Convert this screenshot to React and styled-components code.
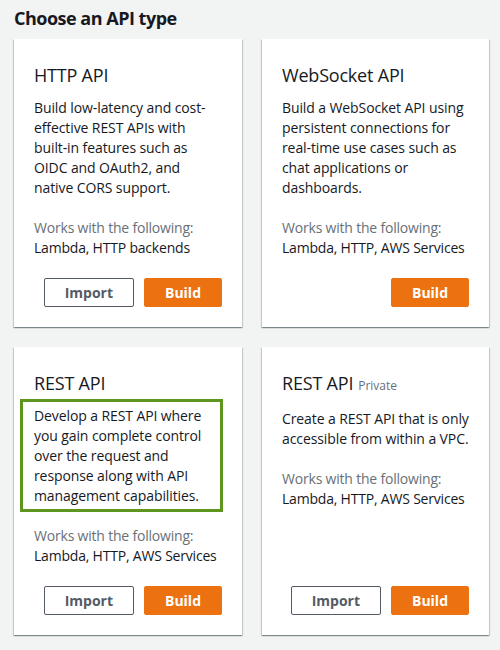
import React from "react";
import styled, { createGlobalStyle } from "styled-components";

const GlobalStyle = createGlobalStyle`
  body {
    margin: 0;
    background-color: #f2f3f3;
    font-family: "Open Sans", "Noto Sans", Arial, sans-serif;
    color: #16191f;
  }
`;

const Page = styled.main`
  padding: 7px 11px 12px 14px;
`;

const Heading = styled.h2`
  margin: 0 0 10px;
  font-size: 18px;
  line-height: 22px;
  font-weight: 700;
  letter-spacing: -0.5px;
`;

const Grid = styled.div`
  display: grid;
  grid-template-columns: 228px 227px;
  grid-auto-rows: 288px;
  gap: 20px;
`;

const Card = styled.section`
  display: flex;
  flex-direction: column;
  padding: 24px 20px 20px;
  background-color: #fff;
  box-shadow: 0 1px 1px 0 rgba(0, 28, 36, 0.3), 1px 1px 1px 0 rgba(0, 28, 36, 0.15),
    -1px 1px 1px 0 rgba(0, 28, 36, 0.15);
`;

const CardTitle = styled.h3`
  margin: 0 0 11px;
  font-size: 18px;
  line-height: 24px;
  font-weight: 400;
  letter-spacing: -0.2px;
`;

const Tag = styled.span`
  margin-left: 5px;
  font-size: 12px;
  letter-spacing: 0;
  color: #687078;
`;

const Description = styled.p`
  position: relative;
  margin: 0;
  font-size: 14px;
  line-height: 20px;
  letter-spacing: -0.1px;

  ${(props) =>
    props.$highlight &&
    `
    &::after {
      content: "";
      position: absolute;
      inset: -7px -1px -6px -14px;
      border: 3px solid #5d951e;
    }
  `}
`;

const Works = styled.div`
  margin-top: 20px;
  font-size: 14px;
  line-height: 20px;
  letter-spacing: -0.2px;

  span {
    display: block;
    color: #687078;
  }
`;

const Actions = styled.div`
  display: flex;
  justify-content: flex-end;
  gap: 10px;
  margin-top: auto;
`;

const Button = styled.button`
  height: 29px;
  padding: 0 20px;
  border-radius: 2px;
  border: 1px solid ${(props) => (props.$primary ? "#ec7211" : "#545b64")};
  background-color: ${(props) => (props.$primary ? "#ec7211" : "#fff")};
  color: ${(props) => (props.$primary ? "#fff" : "#545b64")};
  font-family: inherit;
  font-size: 14px;
  font-weight: 700;
  cursor: pointer;
`;

const apiTypes = [
  {
    title: "HTTP API",
    desc: "Build low-latency and cost-effective REST APIs with built\u2011in features such as OIDC and OAuth2, and native CORS support.",
    works: "Lambda, HTTP backends",
    canImport: true,
  },
  {
    title: "WebSocket API",
    desc: "Build a WebSocket API using persistent connections for real-time use cases such as chat applications or dashboards.",
    works: "Lambda, HTTP, AWS Services",
    canImport: false,
  },
  {
    title: "REST API",
    desc: "Develop a REST API where you gain complete control over the request and response along with API management capabilities.",
    works: "Lambda, HTTP, AWS Services",
    canImport: true,
    highlight: true,
  },
  {
    title: "REST API",
    tag: "Private",
    desc: "Create a REST API that is only accessible from within a VPC.",
    works: "Lambda, HTTP, AWS Services",
    canImport: true,
  },
];

export default function App() {
  return (
    <>
      <GlobalStyle />
      <Page>
        <Heading>Choose an API type</Heading>
        <Grid>
          {apiTypes.map((api, i) => (
            <Card key={i}>
              <CardTitle>
                {api.title}
                {api.tag && <Tag>{api.tag}</Tag>}
              </CardTitle>
              <Description $highlight={api.highlight}>{api.desc}</Description>
              <Works>
                <span>Works with the following:</span>
                {api.works}
              </Works>
              <Actions>
                {api.canImport && <Button>Import</Button>}
                <Button $primary>Build</Button>
              </Actions>
            </Card>
          ))}
        </Grid>
      </Page>
    </>
  );
}
